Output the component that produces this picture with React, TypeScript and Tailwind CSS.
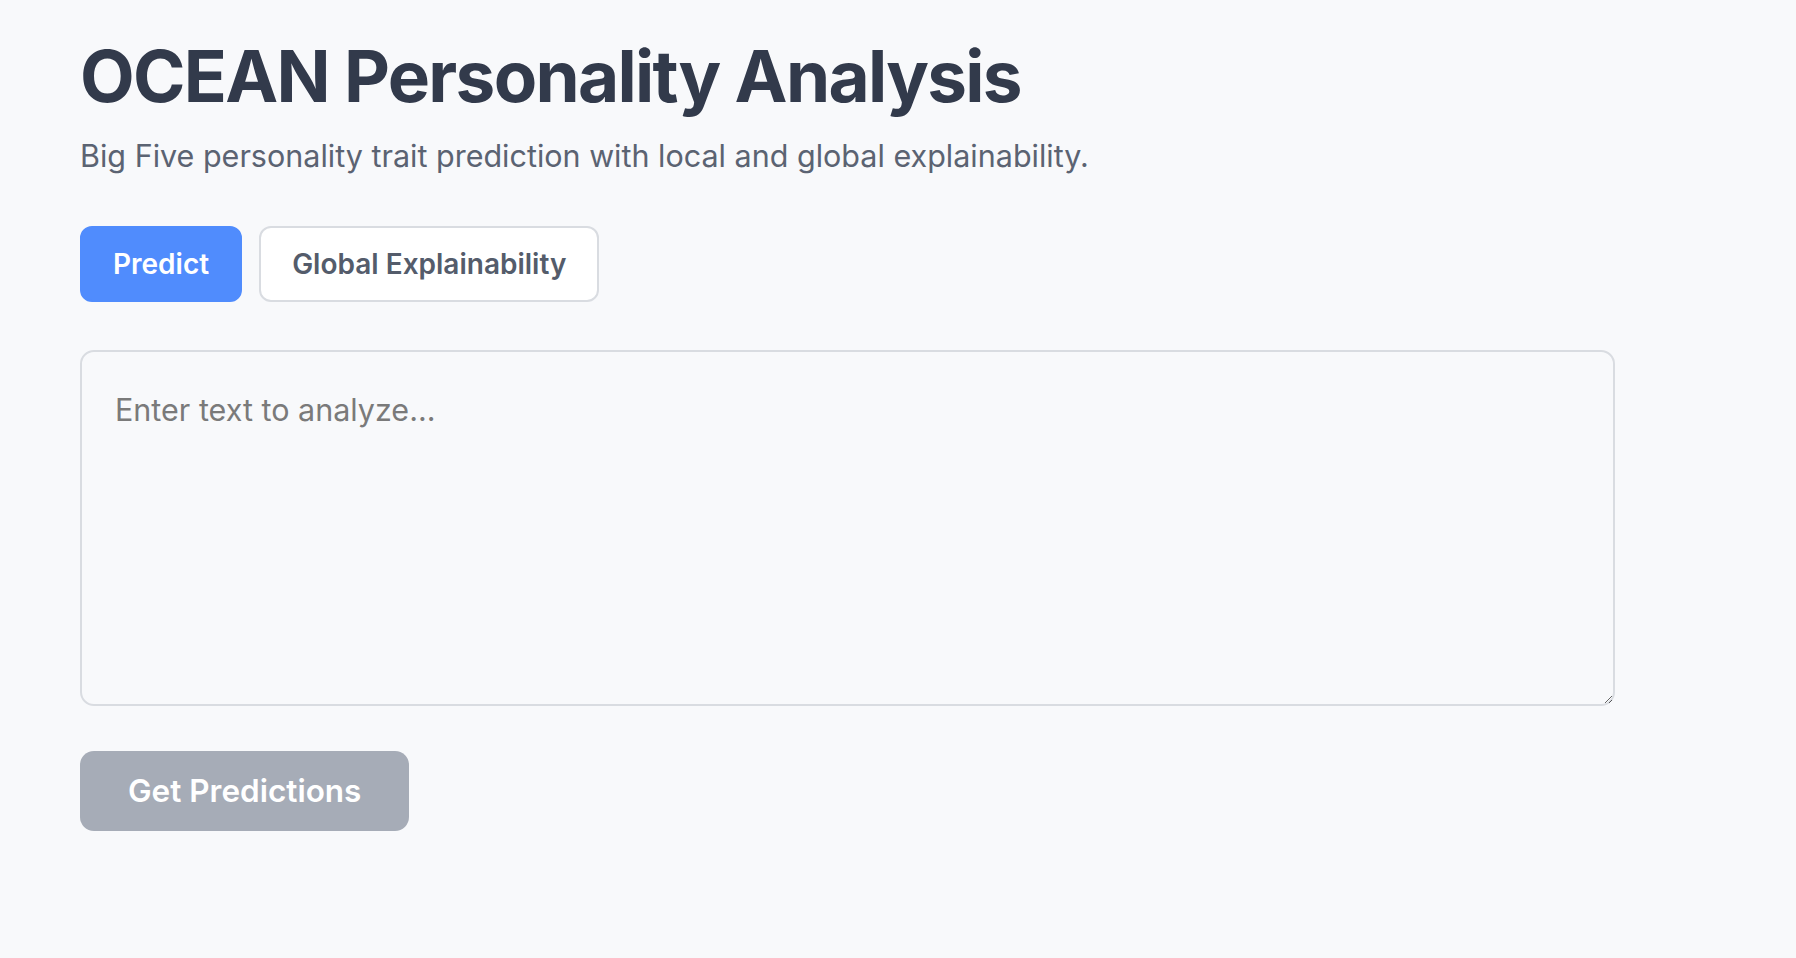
import { useState } from 'react';

export default function App() {
  const [tab, setTab] = useState<'predict' | 'global'>('predict');
  const [text, setText] = useState('');

  return (
    <div className="min-h-screen bg-[#f8f9fb] font-['Inter','Liberation_Sans',sans-serif]">
      <div className="w-[1535px] pl-[80px] pt-[34px] box-content">
        <h1 className="text-[71px] font-bold leading-[1.2] tracking-[-0.024em] text-[#323a4b]">
          OCEAN Personality Analysis
        </h1>
        <p className="mt-[14px] text-[30.5px] leading-[1.5] text-[#5b6372]">
          Big Five personality trait prediction with local and global explainability.
        </p>

        <div className="mt-[47px] flex gap-[17px]">
          <button
            onClick={() => setTab('predict')}
            className={
              tab === 'predict'
                ? 'h-[76px] rounded-[12px] border-2 border-[#508cfd] bg-[#508cfd] px-[31px] text-[28px] font-semibold text-white'
                : 'h-[76px] rounded-[12px] border-2 border-[#d9dce1] bg-white px-[31px] text-[28px] font-semibold text-[#545c6b]'
            }
          >
            Predict
          </button>
          <button
            onClick={() => setTab('global')}
            className={
              tab === 'global'
                ? 'h-[76px] rounded-[12px] border-2 border-[#508cfd] bg-[#508cfd] px-[31px] text-[28px] font-semibold text-white'
                : 'h-[76px] rounded-[12px] border-2 border-[#d9dce1] bg-white px-[31px] text-[28px] font-semibold text-[#545c6b]'
            }
          >
            Global Explainability
          </button>
        </div>

        <textarea
          value={text}
          onChange={(e) => setText(e.target.value)}
          placeholder="Enter text to analyze..."
          className="mt-[48px] block h-[356px] w-full rounded-[14px] border-2 border-[#d9dce1] bg-transparent px-[33px] pt-[35px] pb-[33px] text-[30.5px] leading-[1.5] text-[#323a4b] outline-none placeholder:text-[#7a7a7a]"
        />

        <button
          disabled={!text.trim()}
          className="mt-[45px] h-[80px] rounded-[14px] bg-[#a6acb7] px-[48px] text-[31.5px] font-semibold text-white"
        >
          Get Predictions
        </button>
      </div>
    </div>
  );
}
